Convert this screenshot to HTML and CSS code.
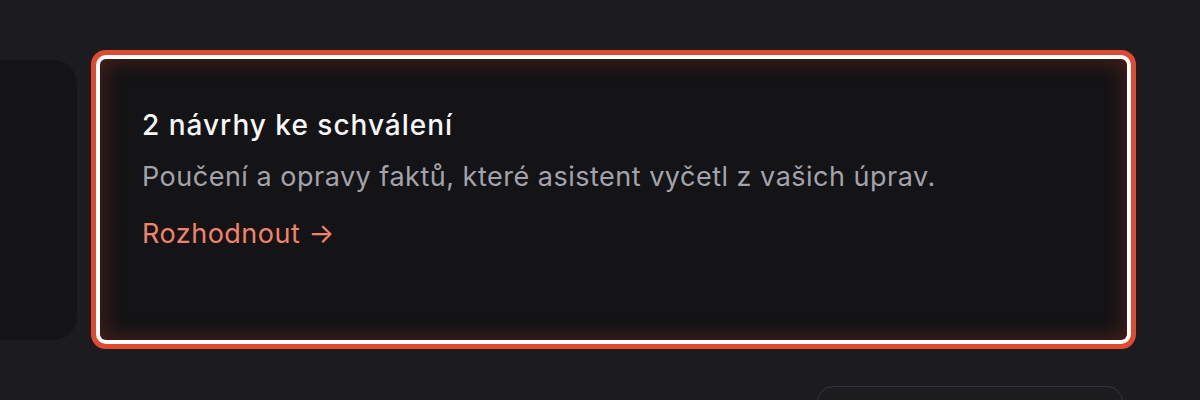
FILE: index.html
```html
<!DOCTYPE html>
<html lang="cs">
<head>
<meta charset="utf-8">
<title>Návrhy</title>
<link rel="stylesheet" href="styles.css">
</head>
<body>
<div class="page">
  <div class="row">
    <div class="side-panel"></div>
    <section class="card">
      <h2 class="card-title">2 návrhy ke schválení</h2>
      <p class="card-text">Poučení a opravy faktů, které asistent vyčetl z vašich úprav.</p>
      <a class="card-link" href="#">Rozhodnout →</a>
    </section>
  </div>
  <div class="footer-row">
    <div class="ghost-button"></div>
  </div>
</div>
</body>
</html>
```
FILE: styles.css
```css
html, body {
  margin: 0;
  padding: 0;
  background: #1c1b20;
  height: 100%;
  overflow: hidden;
}
body {
  font-family: Inter, "Noto Sans", sans-serif;
  color: #f4f4f5;
}
.page {
  width: 1200px;
  height: 400px;
  overflow: hidden;
}
.row {
  display: flex;
  align-items: flex-start;
  gap: 23px;
  padding-top: 59px;
}
.side-panel {
  margin-left: -40px;
  width: 117px;
  height: 280px;
  margin-top: 1px;
  background: #141316;
  border-radius: 24px;
  flex: none;
}
.card {
  width: 1027px;
  height: 281px;
  box-sizing: border-box;
  padding: 46px 42px 0;
  background: #141316;
  border-radius: 6px;
  box-shadow:
    inset 0 0 22px rgba(230, 70, 40, 0.3),
    0 0 0 4px #ffffff,
    0 0 0 9px #e04a2e;
  display: flex;
  flex-direction: column;
  align-items: flex-start;
}
.card-title {
  margin: 0;
  font-size: 28px;
  font-weight: 500;
  letter-spacing: 1px;
  line-height: 40px;
  color: #f7f7f8;
}
.card-text {
  margin: 12px 0 0;
  font-size: 27px;
  font-weight: 400;
  letter-spacing: 0.5px;
  line-height: 40px;
  color: #a3a3ab;
}
.card-link {
  margin-top: 17px;
  font-size: 27px;
  letter-spacing: 0.5px;
  line-height: 40px;
  color: #f0836a;
  text-decoration: none;
}
.footer-row {
  display: flex;
  justify-content: flex-end;
  padding: 46px 77px 0 0;
}
.ghost-button {
  width: 306px;
  height: 48px;
  box-sizing: border-box;
  border: 1px solid #35343b;
  border-radius: 16px;
}
```
